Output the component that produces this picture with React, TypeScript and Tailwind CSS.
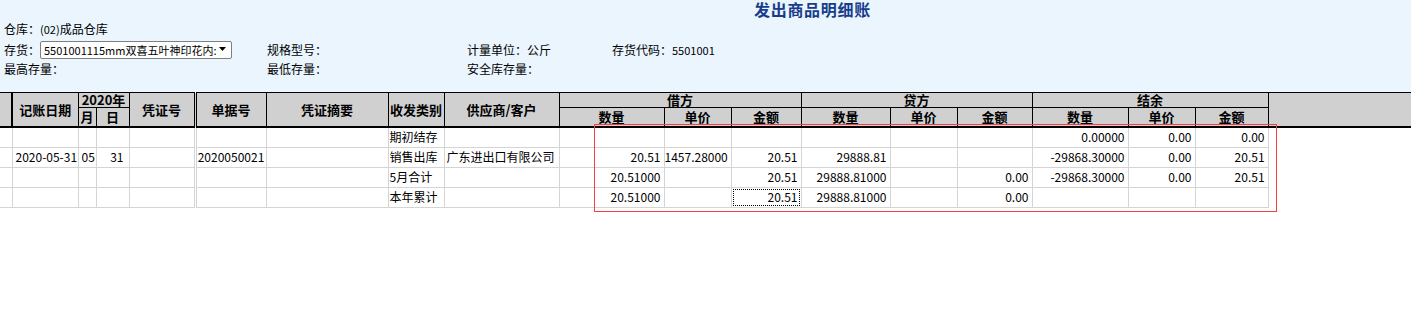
import React from 'react';

type BodyRow = {
    cat: string;
    date?: string;
    m?: string;
    d?: string;
    doc?: string;
    cust?: string;
    vals: string[];
    focus?: number;
};

const rows: BodyRow[] = [
    { cat: '期初结存', vals: ['', '', '', '', '', '', '0.00000', '0.00', '0.00'] },
    {
        cat: '销售出库',
        date: '2020-05-31',
        m: '05',
        d: '31',
        doc: '2020050021',
        cust: '广东进出口有限公司',
        vals: ['20.51', '1457.28000', '20.51', '29888.81', '', '', '-29868.30000', '0.00', '20.51'],
    },
    { cat: '5月合计', vals: ['20.51000', '', '20.51', '29888.81000', '', '0.00', '-29868.30000', '0.00', '20.51'] },
    { cat: '本年累计', vals: ['20.51000', '', '20.51', '29888.81000', '', '0.00', '', '', ''], focus: 2 },
];

const colWidths = [12, 66, 18, 33, 66, 71, 122, 56, 115, 105, 67, 70, 89, 67, 75, 96, 67, 73, 143];

export default function App() {
    const th = 'border border-black bg-[#d0d0d0] p-0 text-center text-[13px] font-bold leading-[14px] text-black';
    const td = 'border border-[#d4d4d4] p-0 h-[20px] text-[12px] leading-[14px] text-black whitespace-nowrap overflow-hidden';

    return (
        <div className="relative w-[1411px] h-[319px] bg-white overflow-hidden font-['Noto_Sans_CJK_SC','Noto_Sans',sans-serif] text-black">
            <div className="h-[92px] bg-[#eaf5fe] text-[12px] leading-[14px]">
                <div className="h-[18px] pl-[754px] text-[16px] font-bold leading-[18px] tracking-[0.7px] text-[#183c8c]">
                    发出商品明细账
                </div>
                <div className="h-[21px] pl-[4px] flex items-center">
                    仓库：<span className="text-[11px]">(02)</span>成品仓库
                </div>
                <div className="h-[21px] grid grid-cols-[267px_200px_145px_1fr] items-center">
                    <div className="pl-[4px] flex items-center">
                        <span>存货：</span>
                        <div className="w-[192px] h-[18px] bg-white border border-[#7f7f7f] rounded-[2px] flex items-center pl-[3px] pr-[3px]">
                            <span className="flex-1 min-w-0 whitespace-nowrap text-[11px]">
                                5501001115mm双喜五叶神印花内:
                            </span>
                            <svg width="8" height="5" viewBox="0 0 8 5" className="ml-[2px] mr-[1px] shrink-0">
                                <path d="M0 0 H7 L3.5 4 Z" fill="#000" />
                            </svg>
                        </div>
                    </div>
                    <div>规格型号：</div>
                    <div>计量单位：公斤</div>
                    <div>
                        存货代码：<span className="text-[11px]">5501001</span>
                    </div>
                </div>
                <div className="h-[17px] grid grid-cols-[267px_200px_145px_1fr] items-center">
                    <div className="pl-[4px]">最高存量：</div>
                    <div>最低存量：</div>
                    <div>安全库存量：</div>
                    <div />
                </div>
            </div>

            <table className="table-fixed border-collapse w-[1411px]">
                <colgroup>
                    {colWidths.map((w, i) => (
                        <col key={i} style={{ width: w }} />
                    ))}
                </colgroup>
                <thead>
                    <tr className="h-[15px]">
                        <th rowSpan={2} className={`${th} border-l-0 border-r-2 border-b-2`} />
                        <th rowSpan={2} className={`${th} border-b-2`}>记账日期</th>
                        <th colSpan={2} className={th}>2020年</th>
                        <th rowSpan={2} className={`${th} border-b-2 border-r-[3px] border-double`}>凭证号</th>
                        <th rowSpan={2} className={`${th} border-b-2`}>单据号</th>
                        <th rowSpan={2} className={`${th} border-b-2`}>凭证摘要</th>
                        <th rowSpan={2} className={`${th} border-b-2`}>收发类别</th>
                        <th rowSpan={2} className={`${th} border-b-2`}>供应商/客户</th>
                        <th colSpan={3} className={th}>借方</th>
                        <th colSpan={3} className={th}>贷方</th>
                        <th colSpan={3} className={th}>结余</th>
                        <th rowSpan={2} className={`${th} border-r-0 border-b-2`} />
                    </tr>
                    <tr className="h-[16px]">
                        <th className={`${th} border-b-2`}>月</th>
                        <th className={`${th} border-b-2`}>日</th>
                        {['数量', '单价', '金额', '数量', '单价', '金额', '数量', '单价', '金额'].map((t, i) => (
                            <th key={i} className={`${th} border-b-2 leading-[18px]`}>{t}</th>
                        ))}
                    </tr>
                </thead>
                <tbody>
                    {rows.map((r, ri) => (
                        <tr key={ri}>
                            <td className={`${td} border-l-0`} />
                            <td className={`${td} pl-[3px] text-[11px]`}>{r.date}</td>
                            <td className={`${td} pl-[3px] text-[11px]`}>{r.m}</td>
                            <td className={`${td} text-right pr-[5px] text-[11px]`}>{r.d}</td>
                            <td className={`${td} border-r-[3px] border-double`} />
                            <td className={`${td} text-center text-[11px]`}>{r.doc}</td>
                            <td className={td} />
                            <td className={`${td} pl-[1px]`}>{r.cat}</td>
                            <td className={`${td} pl-[2px]`}>{r.cust}</td>
                            {r.vals.map((v, vi) => (
                                <td key={vi} className={`${td} text-right text-[11px]`}>
                                    {r.focus === vi ? (
                                        <div className="mx-[1px] h-[17px] border border-dotted border-black flex items-center justify-end pr-[1px]">
                                            {v}
                                        </div>
                                    ) : (
                                        <span className="pr-[3px]">{v}</span>
                                    )}
                                </td>
                            ))}
                            <td className="p-0 border-0" />
                        </tr>
                    ))}
                </tbody>
            </table>

            {/* 标注框 */}
            <div className="absolute left-[594px] top-[124px] w-[683px] h-[88px] border border-[#ff3b3b] pointer-events-none" />
        </div>
    );
}
